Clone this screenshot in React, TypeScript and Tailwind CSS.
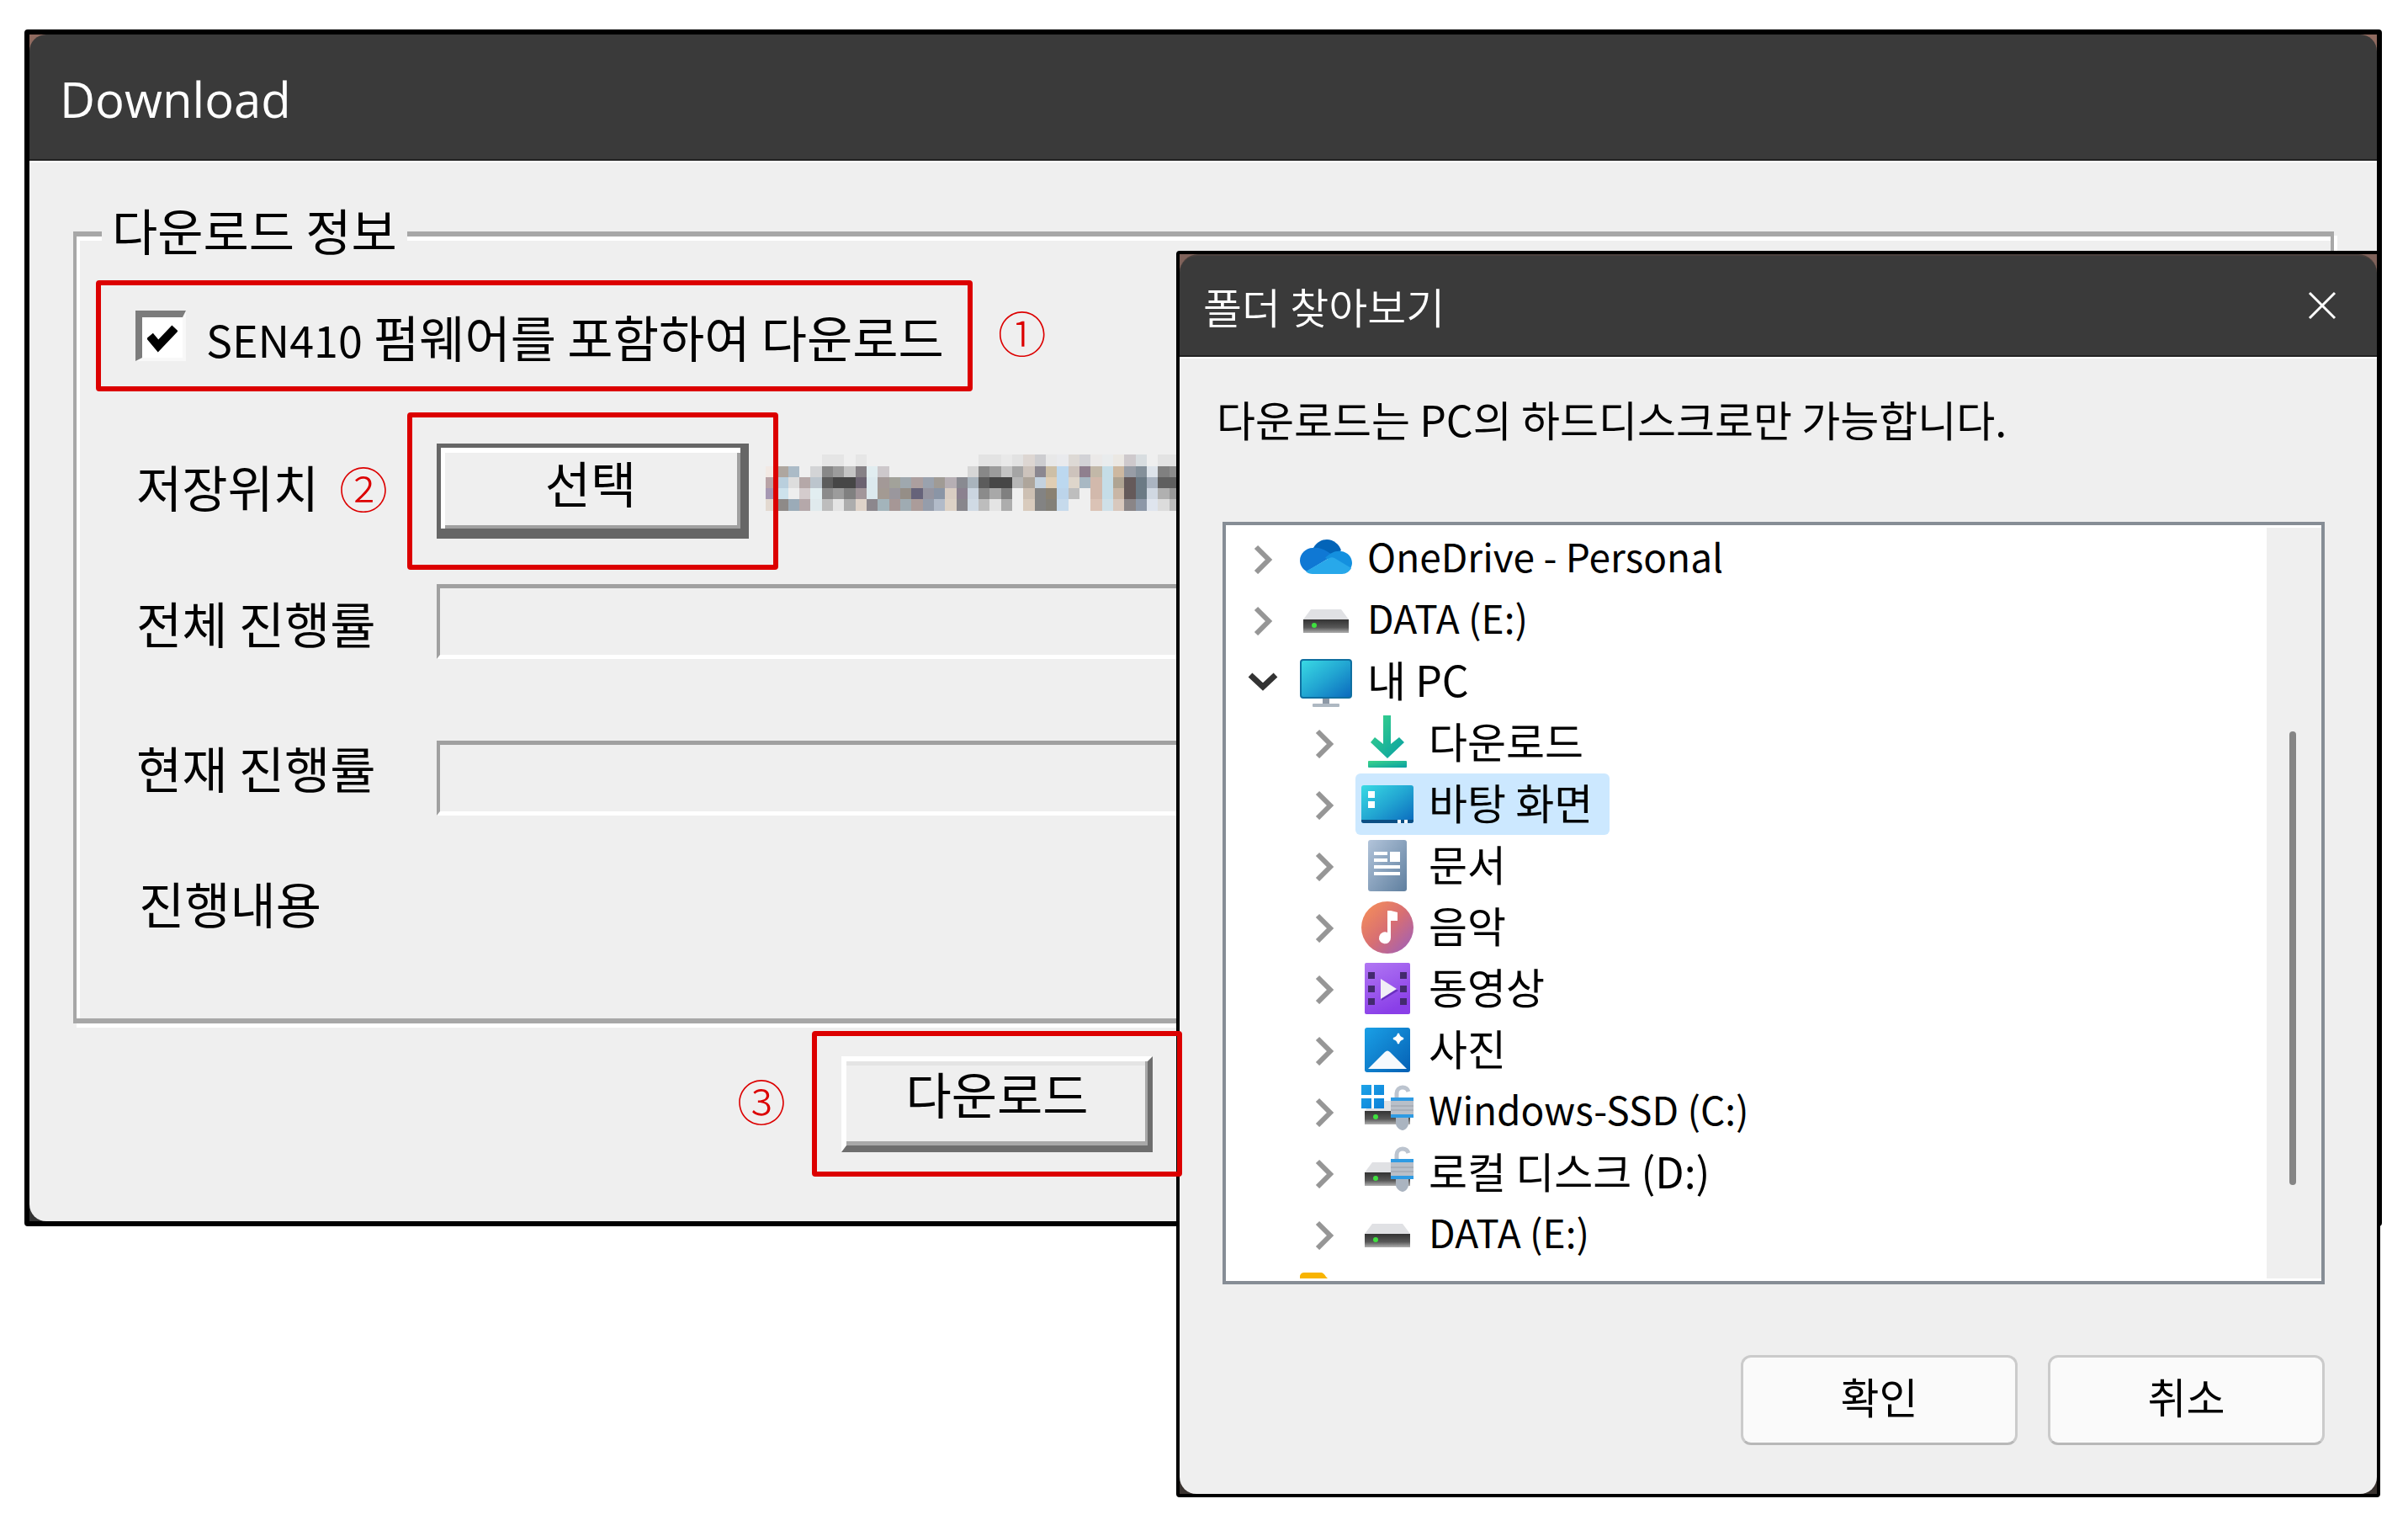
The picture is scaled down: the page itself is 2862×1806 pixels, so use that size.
import React from "react";

const KR = "font-['Noto_Sans_CJK_KR',sans-serif]";

/* Pixelated path text: one colour per mosaic cell, "" where the panel shows through. */
const MOSAIC: string[] = [
  ",,,,,e5e5e5,e5e5e5,,e6e6e6,,,,,,,,,,,e3e3e3,e3e3e3,e9e9e9,e2e2e2,ddd6d2,cdcdd0,e8e8e8,e9eaed,ddd9d5,d2d2d6,ebe9e8,e9eced,ebe8e3,cec9cc,d8dde0,,e3e3e3,e3e3e3",
  "f2e9e4,aea69f,abbbc7,,d3d4d6,888888,9c9c9c,c4c4c4,868186,e1edf0,cdc8cb,,,,,,,,d6d6d6,888888,9c9c9c,c4c4c4,a5a5a5,cdc3bc,8b8790,cdbfa6,bcd8ef,cdc3bc,8f7f8e,c2b8a8,c5dde7,cdb8a0,989da6,84909a,dde3ea,808080,8c8c8c",
  "b9a3a6,b9cfdd,dddddd,b5a8a8,bcc5cd,5c5c5c,464646,464646,6c6371,dce9ee,a39997,a2a29a,9fa8ae,ac9f9f,9aa2ae,a09b95,b6afb4,898a91,a9b4bd,5c5c5c,464646,464646,b6b6b6,aea59b,c4d2df,e0ceb4,bcd8ef,ded6cb,a8b8c3,d2b9ac,c5dde7,afa492,655a5a,6b7a85,aab4c1,5f5f5f,5f5f5f",
  "a698b3,cde2ec,eeeeee,d4cccd,e2eef1,8b8b8b,9c9c9c,808080,a2969a,dce9ee,a39a93,9a979d,958e87,66637a,9695a0,8a95a6,d9cdc3,8b8190,cbd5e0,8b8b8b,a8a8a8,808080,,cdc0b3,838383,8a8172,bcd4ea,bebebe,,d2b9ac,c5dde7,c9b6a5,655a5a,6b7a85,d0d8e2,b0b0b0,999999",
  "e3d9d0,8e8a88,9babb8,b5a8aa,e0eaed,bdbdbd,e4e4e4,adadad,dfd3c9,8c878d,a3b4bb,a69796,9fabb2,ab9c9a,959dab,b2bbc9,ddd2c6,88868c,d0dae4,bdbdbd,e4e4e4,adadad,,d9cbbd,838383,838078,c6daec,,,dbc3b6,cfe0e8,d8c8bd,8a8587,8d98a8,dfe5ee,dcdcdc,bdbdbd",
];

function PixelatedPath() {
  return (
    <svg viewBox="0 0 37 5" className="mb-5 -ml-[15px] h-[67px] w-[493px] shrink-0" shapeRendering="crispEdges" aria-hidden="true">
      {MOSAIC.map((row, y) =>
        row.split(",").map((c, x) => (c ? <rect key={x + "-" + y} x={x} y={y} width="1" height="1" fill={"#" + c} /> : null)),
      )}
    </svg>
  );
}

function Icon({ children }: { children: React.ReactNode }) {
  return (
    <svg viewBox="0 0 62 62" className="size-[62px] shrink-0 overflow-visible" aria-hidden="true">
      {children}
    </svg>
  );
}

function CloudIcon() {
  return (
    <Icon>
      <path d="M16 18C20 11 26 8 32 8c8 0 15 6 17 13l-15 10z" fill="#0364b8" />
      <path d="M15 18c6-1 12 1 17 4l8 5-32 19C3 43 0 38 0 33 0 25 7 18 15 18z" fill="#0f78d4" />
      <path d="M30 30c6-6 12-9 19-8 8 1 13 7 13 14 0 2-1 5-2 7z" fill="#1490df" />
      <path d="M7 46l28-16c2-1 4-1 6 0l20 12c-2 4-6 7-11 7H15c-3 0-6-1-8-3z" fill="#28a8ea" />
    </Icon>
  );
}

function DriveBody() {
  return (
    <>
      <path d="M13 18h36l9 12H4z" fill="#e0e1e4" />
      <rect x="4" y="30" width="54" height="16" fill="url(#driveFace)" />
      <circle cx="17" cy="37" r="3" fill="#3fe03f" />
    </>
  );
}

function DriveIcon() {
  return (
    <Icon>
      <DriveBody />
    </Icon>
  );
}

function PadlockIcon({ windows }: { windows?: boolean }) {
  return (
    <Icon>
      <DriveBody />
      {windows && (
        <>
          <path d="M0 -1H27V27H0z" fill="#fff" />
          <path d="M0 -1h12v12H0zM15 -1h12v12H15zM0 15h12v12H0zM15 15h12v12H15z" fill="url(#winTile)" />
        </>
      )}
      <path d="M42 14V9c0-4 3-7 7-7s6 2 7 5" fill="none" stroke="#bcc4cf" strokeWidth="5" />
      <path d="M41 37h15v8c0 4-4 8-7 8s-8-4-8-8z" fill="#aab4c0" />
      <rect x="35" y="14" width="27" height="24" fill="#b9bfc8" />
      <path d="M35 24h27M35 29h27" stroke="#a9afb8" strokeWidth="2" />
      <path d="M35 16h27M35 36h27" stroke="#2f9be3" strokeWidth="4" />
    </Icon>
  );
}

function MonitorIcon() {
  return (
    <Icon>
      <rect x="27" y="50" width="8" height="9" fill="#8e99a6" />
      <rect x="15" y="57" width="32" height="4" rx="1" fill="#aeb8c2" />
      <rect x="1" y="5" width="60" height="45" rx="3" fill="url(#screen)" stroke="#0f6fa0" strokeWidth="2" />
    </Icon>
  );
}

function DownloadArrowIcon() {
  return (
    <Icon>
      <path d="M26 -2h9V32l10-8 6 6-20 19L11 30l5-6 10 8z" fill="url(#green)" />
      <rect x="8" y="52" width="46" height="8" rx="1" fill="url(#green)" />
    </Icon>
  );
}

function DesktopIcon() {
  return (
    <Icon>
      <rect x="0" y="8" width="62" height="45" rx="3" fill="url(#screen)" />
      <path d="M0 49h62v1a3 3 0 0 1-3 3H3a3 3 0 0 1-3-3z" fill="#0b4f84" />
      <path d="M8 15h8v8H8zM8 27h8v8H8zM43 49h4v4h-4zM51 49h4v4h-4z" fill="#fff" />
    </Icon>
  );
}

function DocumentIcon() {
  return (
    <Icon>
      <rect x="8" y="0" width="46" height="61" rx="3" fill="url(#paper)" />
      <path d="M15 14h16v4H15zM15 22h16v4H15zM34 14h12v12H34zM15 30h31v4H15zM15 38h31v4H15z" fill="#fff" />
    </Icon>
  );
}

function MusicIcon() {
  return (
    <Icon>
      <circle cx="31" cy="31" r="31" fill="url(#music)" />
      <path d="M31 11h4l8 2v10h-8v20a7 7 0 1 1-4-6z" fill="#fff" />
    </Icon>
  );
}

function VideoIcon() {
  return (
    <Icon>
      <rect x="4" y="0" width="54" height="61" rx="2" fill="url(#video)" />
      <path d="M8 11h8v8H8zM8 27h8v8H8zM8 42h8v8H8zM46 11h8v8h-8zM46 27h8v8h-8zM46 42h8v8h-8z" fill="#432a6e" />
      <path d="M24 21l20 12-20 12z" fill="#6a2fc0" />
      <path d="M23 19l19 12-19 12z" fill="#f1eef6" />
    </Icon>
  );
}

function PictureIcon() {
  return (
    <Icon>
      <rect x="4" y="4" width="54" height="53" rx="3" fill="url(#photo)" />
      <path d="M8 53L28 33q3-3 6 0l20 20z" fill="#f6fafd" />
      <path d="M44 11q1 5 6 6-5 1-6 6-1-5-6-6 5-1 6-6z" fill="#fff" stroke="#fff" strokeWidth="2" />
    </Icon>
  );
}

function FolderIcon() {
  return (
    <Icon>
      <path d="M0 7q1-4 5-4h20q3 0 6 5l4 4h27v46H0z" fill="#f8b400" />
    </Icon>
  );
}

function Gradients() {
  return (
    <svg className="absolute size-0" aria-hidden="true">
      <defs>
        <linearGradient id="driveFace" x1="0" y1="0" x2="0" y2="1">
          <stop offset="0" stopColor="#333" />
          <stop offset="0.6" stopColor="#585858" />
          <stop offset="1" stopColor="#b0b0b0" />
        </linearGradient>
        <linearGradient id="winTile" x1="0" y1="0" x2="1" y2="1">
          <stop offset="0" stopColor="#1fa4e8" />
          <stop offset="1" stopColor="#0a7fd8" />
        </linearGradient>
        <linearGradient id="screen" x1="0" y1="0" x2="1" y2="1">
          <stop offset="0" stopColor="#3adbe4" />
          <stop offset="0.5" stopColor="#22a6d2" />
          <stop offset="1" stopColor="#0a68bd" />
        </linearGradient>
        <linearGradient id="green" x1="0" y1="0" x2="1" y2="1">
          <stop offset="0" stopColor="#3bd58a" />
          <stop offset="1" stopColor="#089fa3" />
        </linearGradient>
        <linearGradient id="paper" x1="0" y1="0" x2="1" y2="1">
          <stop offset="0" stopColor="#b2c4da" />
          <stop offset="1" stopColor="#5f7f9f" />
        </linearGradient>
        <linearGradient id="music" x1="0.1" y1="0.1" x2="0.9" y2="0.9">
          <stop offset="0" stopColor="#f28b5c" />
          <stop offset="0.5" stopColor="#d86f72" />
          <stop offset="1" stopColor="#a661b0" />
        </linearGradient>
        <linearGradient id="video" x1="0" y1="0" x2="0.4" y2="1">
          <stop offset="0" stopColor="#b177f3" />
          <stop offset="1" stopColor="#8a3fe8" />
        </linearGradient>
        <linearGradient id="photo" x1="0" y1="0" x2="1" y2="1">
          <stop offset="0" stopColor="#1aa0e6" />
          <stop offset="1" stopColor="#0560b4" />
        </linearGradient>
      </defs>
    </svg>
  );
}

type Node = { label: string; icon: React.ReactNode; level: 0 | 1; open?: boolean; selected?: boolean; latin?: boolean };

const NODES: Node[] = [
  { label: "OneDrive - Personal", icon: <CloudIcon />, level: 0, latin: true },
  { label: "DATA (E:)", icon: <DriveIcon />, level: 0, latin: true },
  { label: "내 PC", icon: <MonitorIcon />, level: 0, open: true },
  { label: "다운로드", icon: <DownloadArrowIcon />, level: 1 },
  { label: "바탕 화면", icon: <DesktopIcon />, level: 1, selected: true },
  { label: "문서", icon: <DocumentIcon />, level: 1 },
  { label: "음악", icon: <MusicIcon />, level: 1 },
  { label: "동영상", icon: <VideoIcon />, level: 1 },
  { label: "사진", icon: <PictureIcon />, level: 1 },
  { label: "Windows-SSD (C:)", icon: <PadlockIcon windows />, level: 1, latin: true },
  { label: "로컬 디스크 (D:)", icon: <PadlockIcon />, level: 1 },
  { label: "DATA (E:)", icon: <DriveIcon />, level: 1, latin: true },
];

function TreeRow({ node }: { node: Node }) {
  return (
    <li
      role="treeitem"
      aria-selected={!!node.selected}
      aria-expanded={!!node.open}
      className={"flex h-[73px] items-center " + (node.level === 1 ? "pl-[99px]" : "pl-[26px]")}
    >
      <button type="button" aria-label={node.label + " 펼치기"} className="flex size-9 shrink-0 items-center justify-center">
        {node.open ? (
          <svg viewBox="0 0 36 36" className="size-9" fill="none" stroke="#333" strokeWidth="7">
            <path d="M3 10l15 14 15-14" />
          </svg>
        ) : (
          <svg viewBox="0 0 36 36" className="size-9" fill="none" stroke="#969696" strokeWidth="6">
            <path d="M10 4l15 15-15 15" />
          </svg>
        )}
      </button>
      <div
        className={
          "ml-[19px] flex h-full items-center gap-[18px] rounded-md pr-5 pl-[7px] whitespace-nowrap " +
          (node.selected ? "bg-[#cce8ff]" : "")
        }
      >
        {node.icon}
        <span className={"pb-2 leading-[64px] " + (node.latin ? "text-[46px]" : "text-[50px]")}>{node.label}</span>
      </div>
    </li>
  );
}

function Callout({ children }: { children: string }) {
  return <span className="w-[60px] shrink-0 pb-[10px] text-center text-[58px] leading-[64px] font-light text-[#dc0000]">{children}</span>;
}

const FRAME = "relative z-20 rounded-[4px] border-[6px] border-[#dc0000]";
const LABEL = "w-[357px] shrink-0 text-[59px] leading-[64px]";
const TROUGH =
  "h-[89px] min-w-0 flex-1 border-t-[5px] border-r-[4px] border-b-[5px] border-l-[4px] border-t-[#a0a0a0] border-r-white border-b-white border-l-[#a0a0a0]";

function BrowseFolderDialog() {
  return (
    <section
      role="dialog"
      aria-labelledby="browse-title"
      className="absolute top-[298px] right-[33px] z-10 w-1/2 rounded-[4px] border-4 border-black bg-linear-to-b from-[#7f625a] from-50% to-[#3a3330] to-50%"
    >
      <header className="flex h-[122px] items-center justify-between rounded-t-[22px] border-t-2 border-b-2 border-t-[#4a403d] border-b-[#222] bg-[#3a3a3a] pr-[48px] pl-[28px] text-white">
        <h2 id="browse-title" className="text-[50px] leading-[72px] font-[350]">
          폴더 찾아보기
        </h2>
        <button type="button" aria-label="닫기">
          <svg viewBox="0 0 34 34" className="size-[34px]" fill="none" stroke="#fff" strokeWidth="3">
            <path d="M2 2l30 30M32 2L2 32" />
          </svg>
        </button>
      </header>
      <div className="flex flex-col rounded-b-[20px] border-t-2 border-white bg-[#efefef] pt-[35px] pr-[62px] pb-[58px] pl-[51px]">
        <p className="-ml-[7px] text-[50px] leading-[72px] whitespace-nowrap">다운로드는 PC의 하드디스크로만 가능합니다.</p>
        <div className="mt-[87px] flex h-[906px] border-4 border-[#868d95] bg-white py-[3px]">
          <ul role="tree" className="min-w-0 flex-1 overflow-hidden">
            {NODES.map((n, i) => (
              <TreeRow key={i} node={n} />
            ))}
            <li className="flex h-[73px] items-center pl-[88px]">
              <FolderIcon />
            </li>
          </ul>
          <div className="flex w-[65px] justify-center bg-[#efefef] pt-[242px] pr-[3px]">
            <div className="h-[539px] w-[8px] rounded-full bg-[#858585]" />
          </div>
        </div>
        <div className="mt-[84px] flex justify-end gap-[36px]">
          {["확인", "취소"].map((t) => (
            <button
              key={t}
              type="button"
              className="h-[107px] w-[329px] rounded-xl border-[3px] border-[#cbcbcb] border-b-[#b8b8b8] bg-[#fafafa] pb-[12px] text-[50px] leading-[72px]"
            >
              {t}
            </button>
          ))}
        </div>
      </div>
    </section>
  );
}

export default function App() {
  return (
    <main className={"relative min-h-screen overflow-hidden bg-white pt-[35px] pr-[31px] pl-[29px] text-black " + KR}>
      <Gradients />
      <section className="rounded-[4px] border-[6px] border-black bg-linear-to-b from-[#8f6a5f] from-50% to-[#333] to-50%">
        <header className="flex h-[150px] items-center rounded-t-[20px] border-b-2 border-[#222] bg-[#3a3a3a] pt-[5px] pl-[36px] text-white">
          <h1 className="font-['Open_Sans',sans-serif] text-[58px] leading-[72px] font-normal">Download</h1>
        </header>
        <div className="rounded-b-[20px] border-t-2 border-white bg-[#efefef] pt-[48px] pr-[51px] pb-[53px] pl-[52px]">
          <fieldset className="min-w-0 border-x-4 border-y-[6px] border-[#a7a7a7] pb-[105px] pl-[23px] shadow-[4px_5px_0_#fff,inset_4px_5px_0_#fff]">
            <legend className="ml-[7px] bg-[#efefef] px-[12px] pb-[10px] text-[59px] leading-[64px]">다운로드 정보</legend>
            <div className="mt-[18px] flex items-center gap-[29px]">
              <label className={"flex h-[132px] items-center pr-[28px] pl-[41px] whitespace-nowrap " + FRAME}>
                <span className="grid size-[60px] shrink-0 place-items-center">
                  <input
                    type="checkbox"
                    defaultChecked
                    className="peer col-start-1 row-start-1 size-[60px] appearance-none border-t-[8px] border-r-[4px] border-b-[4px] border-l-[8px] border-t-[#7c7c7c] border-r-[#f8f8f8] border-b-[#f8f8f8] border-l-[#7c7c7c] bg-white"
                  />
                  <svg viewBox="0 0 36 36" className="pointer-events-none invisible col-start-1 row-start-1 mt-2 ml-1 size-9 peer-checked:visible" fill="none" stroke="#000" strokeWidth="10" aria-hidden="true">
                    <path d="M3 14l10 12L33 5" />
                  </svg>
                </span>
                <span className="ml-[24px] pt-[4px] text-[59px] leading-[64px]">
                  <span className="text-[52px]">SEN410</span> 펌웨어를 포함하여 다운로드
                </span>
              </label>
              <Callout>①</Callout>
            </div>
            <div className="mt-[25px] flex items-center pl-[48px]">
              <span className="w-[240px] shrink-0 pb-[12px] text-[59px] leading-[64px]">저장위치</span>
              <Callout>②</Callout>
              <div className={"ml-[22px] h-[187px] w-[441px] shrink-0 px-[29px] py-[31px] " + FRAME}>
                <button
                  type="button"
                  className="h-[113px] w-full border-t-[5px] border-r-[10px] border-b-[12px] border-l-[5px] border-[#666] pb-[14px] text-[59px] leading-[64px] shadow-[inset_5px_6px_0_#fff,inset_-4px_-4px_0_#a0a0a0]"
                >
                  선택
                </button>
              </div>
              <PixelatedPath />
            </div>
            <div className="mt-[17px] flex pl-[48px]">
              <span id="total" className={"pt-[14px] " + LABEL}>
                전체 진행률
              </span>
              <div role="progressbar" aria-labelledby="total" aria-valuenow={0} className={TROUGH} />
            </div>
            <div className="mt-[97px] flex pl-[48px]">
              <span id="current" className={LABEL}>
                현재 진행률
              </span>
              <div role="progressbar" aria-labelledby="current" aria-valuenow={0} className={TROUGH} />
            </div>
            <p className="mt-[72px] pl-[51px] text-[59px] leading-[64px]">진행내용</p>
          </fieldset>
          <div className="mt-[9px] flex items-center pl-[788px]">
            <Callout>③</Callout>
            <div className={"ml-[30px] h-[173px] w-[440px] shrink-0 px-[29px] py-[24px] " + FRAME}>
              <button
                type="button"
                className="h-[114px] w-full border-t-[6px] border-r-[6px] border-b-[8px] border-l-[6px] border-t-white border-r-[#6e6e6e] border-b-[#6e6e6e] border-l-white pb-[24px] text-[59px] leading-[64px] shadow-[inset_-3px_-5px_0_#a8a8a8,inset_0_5px_0_#e4e4e4]"
              >
                다운로드
              </button>
            </div>
          </div>
        </div>
      </section>
      <BrowseFolderDialog />
    </main>
  );
}
